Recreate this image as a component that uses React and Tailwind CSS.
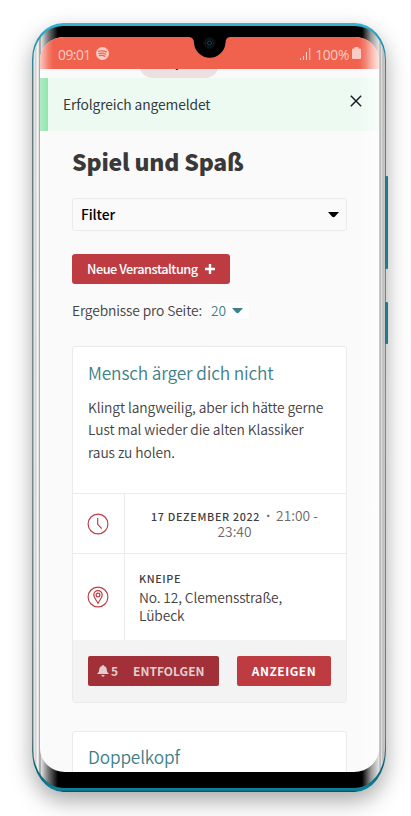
import React from 'react';

const SANS = "font-['Noto_Sans_CJK_SC','Noto_Sans_CJK_JP',sans-serif]";

function Notch() {
  return (
    <svg className="absolute left-[185px] top-[28px]" width="50" height="32" viewBox="0 0 50 32">
      <path d="M0 0H50V9H45Q40.500 9.500 40.500 15A15.800 16 0 0 1 9 15Q9 9.500 4 9H0Z" fill="#000" />
      <circle cx="24.500" cy="15" r="6.500" fill="#07090b" />
      <circle cx="24.500" cy="15" r="4.200" fill="#05090c" stroke="#10222a" strokeWidth="1" />
      <circle cx="24.500" cy="15" r="2" fill="#020405" stroke="#1b4350" strokeWidth="1" />
    </svg>
  );
}

function StatusBar() {
  return (
    <div className="flex h-8 shrink-0 items-center bg-[linear-gradient(90deg,#f9b3a8_0,#f1624e_13px,#f1624e_326px,#f9b3a8_339px)] pl-[18px] pr-[18px] pt-[3px] font-['Open_Sans',sans-serif] text-[13.8px] font-medium leading-none text-[#fbccc5]">
      <span className="tracking-[-0.5px]">09:01</span>
      <svg className="mb-[2px] ml-[5px]" width="13" height="13" viewBox="0 0 13 13">
        <circle cx="6.500" cy="6.500" r="6.500" fill="#fbccc5" />
        <path d="M2.500 4.300Q6.500 3 10.600 5M3 6.600Q6.500 5.500 9.700 7.200M3.400 8.700Q6.500 7.900 9 9.300" fill="none" stroke="#f1624e" strokeWidth="1.200" strokeLinecap="round" />
      </svg>
      <svg className="mb-[2px] ml-auto" width="11" height="12" viewBox="0 0 11 12">
        <path d="M.5 10v2M3.500 8v4M6.500 4v8M9.700 0v12" stroke="#fbccc5" strokeWidth="1.100" />
      </svg>
      <span className="ml-[4px] tracking-[-0.3px]">100%</span>
      <svg className="mb-[4px] ml-[3px]" width="9" height="12" viewBox="0 0 9 12">
        <path d="M2.500 0h4v1.500H8Q9 1.500 9 2.500V11Q9 12 8 12H1Q0 12 0 11V2.500Q0 1.500 1 1.500H2.500Z" fill="#fbccc5" />
      </svg>
    </div>
  );
}

function Caret({ color }) {
  return (
    <svg className="shrink-0" width="11" height="6" viewBox="0 0 11 6">
      <path d="M0 0H11L7 4.600Q5.500 6 4 4.600Z" fill={color} />
    </svg>
  );
}

function Alert() {
  return (
    <div className="flex h-[53px] shrink-0 items-start border-l-[8px] border-[#93e6ad] bg-[#edfaf2] pl-[15px] pr-[17px]">
      <span className="mt-[15px] text-[13.8px] leading-[22px] tracking-[-0.12px] text-[#343a40]">Erfolgreich angemeldet</span>
      <svg className="ml-auto mt-[17px]" width="12" height="12" viewBox="0 0 12 12">
        <path d="M.8.8 11.200 11.200M11.200.8.8 11.200" stroke="#1c1c26" strokeWidth="1.500" />
      </svg>
    </div>
  );
}

function ClockIcon() {
  return (
    <svg width="22" height="22" viewBox="0 0 22 22" fill="none" stroke="#c13a43">
      <circle cx="11" cy="11" r="9.900" strokeWidth="1.150" />
      <path d="M10.700 5v6.300L14.700 15.600" strokeWidth="1.150" />
    </svg>
  );
}

function PlaceIcon() {
  return (
    <svg width="22" height="22" viewBox="0 0 22 22" fill="none" stroke="#c13a43">
      <circle cx="11" cy="11" r="9.900" strokeWidth="1.150" />
      <path d="M11 17.300C9.500 14 6.800 12 6.800 8.900a4.200 4.300 0 0 1 8.400 0C15.200 12 12.500 14 11 17.300Z" strokeWidth="1.200" />
      <circle cx="11" cy="9" r="1.900" strokeWidth="1.200" />
    </svg>
  );
}

function EventCard() {
  return (
    <article className="mt-[24px] h-[357px] shrink-0 overflow-hidden rounded-[3px] border border-[#ebebeb] bg-white">
      <div className="h-[146px] px-[15px] pt-[13px]">
        <h2 className="whitespace-nowrap text-[17.3px] font-[350] leading-[26px] tracking-[-0.15px] text-[#3f7f87]">Mensch ärger dich nicht</h2>
        <p className="mt-[10px] whitespace-nowrap text-[13.8px] font-[350] leading-[22.3px] tracking-[-0.09px] text-[#454243]">
          Klingt langweilig, aber ich hätte gerne<br />Lust mal wieder die alten Klassiker<br />raus zu holen.
        </p>
      </div>
      <div className="flex h-[60px] border-t border-[#ebebeb]">
        <div className="flex w-[52px] items-center justify-center border-r border-[#ebebeb] pr-px"><ClockIcon /></div>
        <p className="flex-1 whitespace-nowrap pr-[2px] pt-[14px] text-center text-[13.8px] font-[350] leading-[15px] text-[#6c696a]">
          <span className="text-[10.8px] font-medium tracking-[0.66px] text-[#403d3e]">17 DEZEMBER 2022</span>
          <span className="mx-[6px] font-['Open_Sans',sans-serif] font-bold">·</span>21:00 -<br />23:40
        </p>
      </div>
      <div className="flex h-[87px] border-t border-[#ebebeb]">
        <div className="flex w-[52px] items-center justify-center border-r border-[#ebebeb] pr-px"><PlaceIcon /></div>
        <div className="whitespace-nowrap pl-[14px] pt-[15px] text-[13.8px] font-[350] leading-[18px] tracking-[-0.12px] text-[#454243]">
          <p className="text-[10.8px] font-medium tracking-[0.6px] text-[#403d3e]">KNEIPE</p>
          <p className="pt-px">No. 12, Clemensstraße,<br />Lübeck</p>
        </div>
      </div>
      <div className="flex h-[62px] justify-between bg-[#f3f3f3] px-[15px] pt-[16px] text-[12px] font-bold leading-[30px]">
        <button className="flex h-[30px] w-[131px] items-center rounded-[2px] bg-[#a23038] pl-[9px] text-[#e2cdce]">
          <svg width="12" height="12" viewBox="0 0 12 12" fill="#e2cdce">
            <path d="M6 0Q7 0 7 1Q9.800 1.800 9.800 5Q9.800 7.500 12 9H0Q2.200 7.500 2.200 5Q2.200 1.800 5 1Q5 0 6 0ZM4.300 10h3.400Q7.400 11.700 6 11.700T4.300 10Z" />
          </svg>
          <span className="ml-[2px]">5</span>
          <span className="ml-[15px]">ENTFOLGEN</span>
        </button>
        <button className="h-[30px] w-[94px] rounded-[2px] bg-[#be3b42] text-center tracking-[0.5px] text-white">ANZEIGEN</button>
      </div>
    </article>
  );
}

function Page() {
  return (
    <main className="flex w-[275px] flex-col pt-[13px]">
      <h1 className="whitespace-nowrap text-[23px] font-black leading-[34px] tracking-[-0.22px] text-[#3b3839]">Spiel und Spaß</h1>
      <div className="mt-[20px] flex h-[33px] items-center justify-between rounded-[3px] border border-[#ebebeb] pl-[8px] pr-[7px]">
        <span className="mb-[2px] text-[13.8px] font-medium leading-[28px] tracking-[-0.1px] text-black">Filter</span>
        <Caret color="#000" />
      </div>
      <button className="mt-[23px] flex h-[30px] w-[158px] items-center rounded-[3px] bg-[#be3b42] pl-[15px] text-white">
        <span className="whitespace-nowrap text-[12.8px] font-medium leading-[30px] tracking-[-0.5px]">Neue Veranstaltung</span>
        <svg className="ml-auto mr-[15px] shrink-0" width="10" height="10" viewBox="0 0 10 10">
          <path d="M5 0v10M0 5h10" stroke="#fff" strokeWidth="2.400" />
        </svg>
      </button>
      <div className="mt-[19px] flex h-[15px] items-center text-[13.8px] font-[350] leading-[15px] text-[#454243]">
        <span className="whitespace-nowrap tracking-[-0.13px]">Ergebnisse pro Seite:</span>
        <span className="ml-auto mr-[98px] flex w-[39px] items-center gap-[6px] bg-white pl-[1px] text-[#3f7f87]">20 <Caret color="#3f7f87" /></span>
      </div>
      <div className="h-[4px]" />
      <EventCard />
      <article className="mt-[28px] h-[80px] shrink-0 rounded-[3px] border border-[#ebebeb] bg-white px-[15px] pt-[12px]">
        <h2 className="text-[17.3px] font-[350] leading-[26px] tracking-[-0.15px] text-[#3f7f87]">Doppelkopf</h2>
      </article>
    </main>
  );
}

export default function App() {
  return (
    <div className={`relative h-[816px] w-[411px] overflow-hidden bg-white ${SANS}`}>
      <div className="absolute left-[385px] top-[176px] h-[93px] w-[3px] rounded-[1px] bg-[#24788a]" />
      <div className="absolute left-[385px] top-[302px] h-[42px] w-[3px] rounded-[1px] bg-[#24788a]" />
      <div className="ml-[32px] h-[816px] w-[354px] pt-[23px]">
        <div className="h-[769px] rounded-[31px_31px_31px_31px/36px_36px_42px_42px] bg-[linear-gradient(180deg,#38b5d2_0,#168fa9_24px,#64797d_60px,#7a8c8e_400px,#64797d_715px,#075e70_745px,#0d8299_767px,#06495a_769px)] px-px pb-[4px] pt-[3px] shadow-[0_9px_22px_rgba(0,0,0,0.34)]">
          <div className="h-full rounded-[30px_30px_30px_30px/34px_34px_39px_39px] bg-[linear-gradient(90deg,#777_0,#f1f1f1_1px,#c9c9c9_3px,#fafafa_4px,#ddd_6px,#777_7px,#e3e3e3_8px,#888_14px,#555_18px,#000_25px,#000_329px,#999_338px,#e5e5e5_346px,#aaa_347px,#eee_349px,#9b9b9b_350px,#e4e4e4_351px,#aaa_352px)] pb-[16px] pl-[7px] pr-[6px] pt-[11px]">
            <div className="relative flex h-[735px] w-[339px] flex-col overflow-hidden rounded-[24px_24px_25px_25px/23px_23px_24px_24px] bg-[#fafafa]">
              <StatusBar />
              <div className="flex h-[9px] shrink-0 items-end overflow-hidden pl-[99px]">
                <div className="flex h-[28px] w-[80px] items-end rounded-full bg-[#ece0e1] pl-[27px]">
                  <span className="mb-[3px] text-[14px] font-bold leading-[28px] text-[#282828]">Spiele</span>
                </div>
              </div>
              <Alert />
              <div className="flex pl-[32px]"><Page /></div>
              <div className="pointer-events-none absolute inset-0 bg-[linear-gradient(90deg,rgba(255,255,255,.25)_0,rgba(255,255,255,0)_8px,rgba(255,255,255,0)_319px,rgba(255,255,255,.65)_339px)]" />
            </div>
          </div>
        </div>
      </div>
      <Notch />
    </div>
  );
}
